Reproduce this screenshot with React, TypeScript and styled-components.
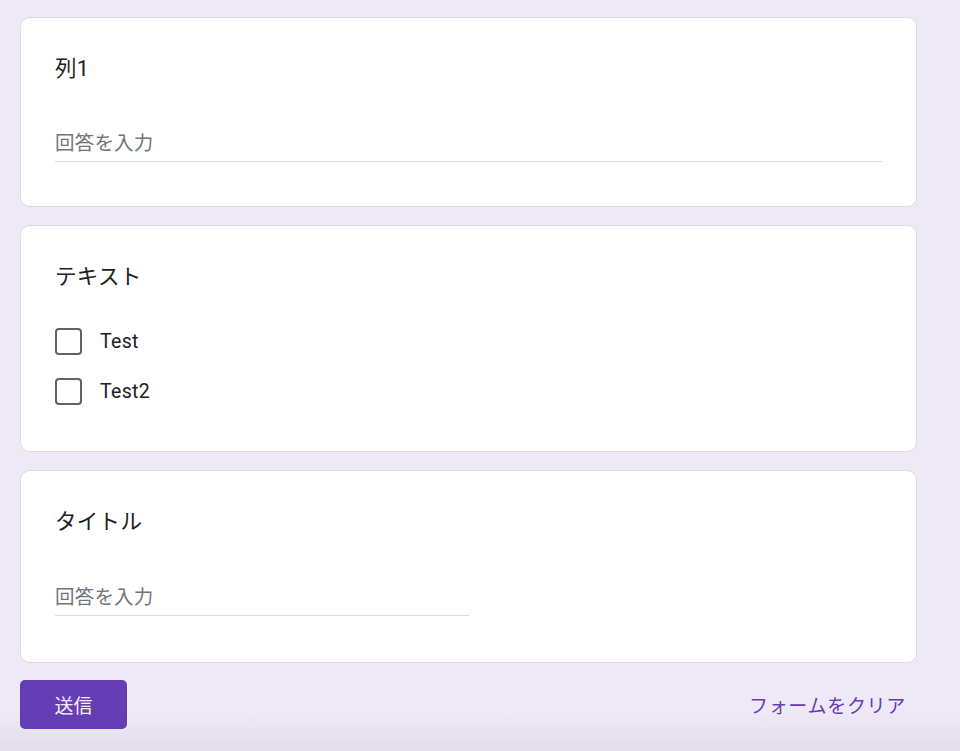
import styled, { createGlobalStyle } from 'styled-components'

const GlobalStyle = createGlobalStyle`
  html, body {
    margin: 0;
    padding: 0;
  }

  body {
    min-height: 100vh;
    background: linear-gradient(to bottom, #ede9f6 0, #ede9f6 calc(100% - 40px), #e1dde9 100%);
    font-family: Roboto, "Noto Sans CJK JP", sans-serif;
    color: #202124;
  }
`

const Page = styled.div`
  width: 897px;
  padding: 17px 0 0 20px;
  display: flex;
  flex-direction: column;
  gap: 18px;
`

const Card = styled.section`
  background: #fff;
  border: 1px solid #dadce0;
  border-radius: 10px;
  padding: 37px 34px 44px;
  display: flex;
  flex-direction: column;
  align-items: flex-start;
`

const Title = styled.div`
  font-size: 21.5px;
  line-height: 28px;
  letter-spacing: 0.3px;
  color: #202124;
`

const Answer = styled.input<{ $short?: boolean }>`
  box-sizing: border-box;
  width: ${p => (p.$short ? '50%' : '100%')};
  height: 36px;
  margin: ${p => (p.$short ? '44px 0 2px' : '43px 0 0')};
  padding: 0;
  border: none;
  border-bottom: 1px solid #dadce0;
  outline: none;
  background: transparent;
  font-family: inherit;
  font-size: 19.5px;
  letter-spacing: 0.2px;
  color: #202124;

  &::placeholder {
    color: #70757a;
  }
`

const OptionList = styled.div`
  margin: 37px 0 2px;
  display: flex;
  flex-direction: column;
  gap: 23px;
`

const OptionRow = styled.label`
  display: flex;
  align-items: center;
  gap: 18px;
  font-size: 19.5px;
  letter-spacing: 0.3px;
  color: #202124;
  cursor: pointer;
`

const Box = styled.span`
  box-sizing: border-box;
  width: 27px;
  height: 27px;
  border: 2.5px solid #5f6368;
  border-radius: 4px;
`

const Footer = styled.div`
  margin-top: -1px;
  display: flex;
  align-items: center;
  justify-content: space-between;
`

const SubmitButton = styled.button`
  width: 107px;
  height: 49px;
  border: none;
  border-radius: 5px;
  background: #643db4;
  color: #f3eefa;
  font-family: inherit;
  font-size: 19px;
  cursor: pointer;
`

const ClearButton = styled.button`
  border: none;
  background: transparent;
  padding: 0 11px;
  height: 49px;
  color: #673ab7;
  font-family: inherit;
  font-size: 19px;
  letter-spacing: 0.7px;
  cursor: pointer;
`

const options = ['Test', 'Test2']

export default function App() {
  return (
    <>
      <GlobalStyle />
      <Page>
        <Card>
          <Title>列1</Title>
          <Answer placeholder='回答を入力' />
        </Card>

        <Card>
          <Title>テキスト</Title>
          <OptionList>
            {options.map(option => (
              <OptionRow key={option}>
                <Box />
                {option}
              </OptionRow>
            ))}
          </OptionList>
        </Card>

        <Card>
          <Title>タイトル</Title>
          <Answer $short placeholder='回答を入力' />
        </Card>

        <Footer>
          <SubmitButton>送信</SubmitButton>
          <ClearButton>フォームをクリア</ClearButton>
        </Footer>
      </Page>
    </>
  )
}
